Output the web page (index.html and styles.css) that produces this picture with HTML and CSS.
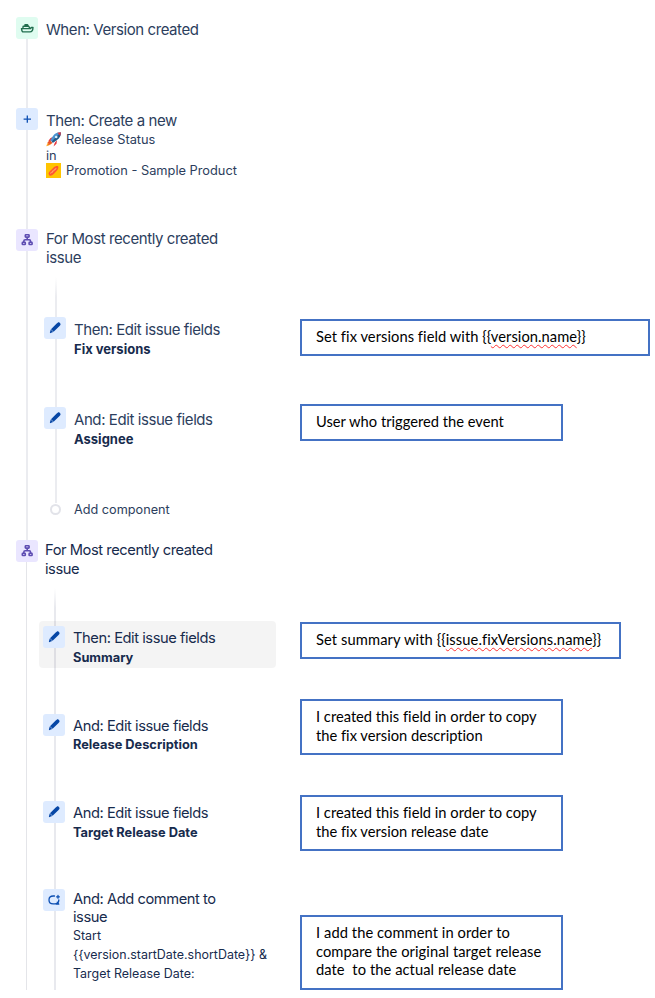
FILE: index.html
```
<!DOCTYPE html>
<html lang="en">
<head>
    <meta charset="UTF-8">
    <meta name="viewport" content="width=device-width, initial-scale=1.0">
    <title>Automation rule</title>
    <link rel="stylesheet" href="styles.css">
</head>
<body>
    <svg class="sprite" width="0" height="0">
        <symbol id="pencil" viewBox="0 0 22 22">
            <path fill="#0747a6" d="M12.7 6.5l1-.8c.7-.5 1.3-.5 1.9.1l.5.5c.6.6.6 1.3.1 1.9l-.9 1-5.7 5.6L7 12.200zM6.700 12.600l2.500 2.500-2.600 1c-.5.2-.8-.1-.7-.6z"/>
        </symbol>
        <symbol id="branch" viewBox="0 0 22 22">
            <g fill="none" stroke="#5e4db2" stroke-width="1.6">
                <rect x="9.3" y="5.8" width="3.8" height="2.3" rx=".6"/>
                <rect x="6.3" y="13.3" width="3" height="2.2" rx=".6"/>
                <rect x="13.1" y="13.3" width="3" height="2.2" rx=".6"/>
                <path d="M11.2 8v2.8M7.8 13v-.8c0-.9.5-1.4 1.4-1.4h4c.9 0 1.4.5 1.4 1.4v.8"/>
            </g>
        </symbol>
    </svg>

    <main class="page">
        <div class="flow">
            <div class="group">
                <div class="step trigger">
                    <span class="icon green">
                        <svg viewBox="0 0 22 22">
                            <path fill="none" stroke="#216e4e" stroke-width="1.4" stroke-linejoin="round" d="M5.500 11.600h9l.9-1.100H17c-.1 2.600-1.100 4.400-3 4.400H7.300c-1.200 0-1.600-1.600-1.800-3.300zM7 11.400V9.900c0-.4.2-.6.6-.6h5.100l1.300 2.100M9 9.100V7.800h2.600l.7 1.400"/>
                        </svg>
                    </span>
                    <div class="text"><h2>When: Version created</h2></div>
                </div>
                <div class="step create">
                    <span class="icon blue">
                        <svg viewBox="0 0 22 22">
                            <path fill="none" stroke="#0c4fb3" stroke-width="1.3" d="M11.3 7.4v7.4M7.6 11.1H15"/>
                        </svg>
                    </span>
                    <div class="text">
                        <h2>Then: Create a new</h2>
                        <p class="small">
                            <svg class="emoji" viewBox="0 0 15 15">
                                <path fill="#e5343d" d="M4.3 6.2L7 4.7 5.6 8.6 2 9.6zM8.8 10.8l-1.3 3.6 3-2.7.5-3.8z"/>
                                <path fill="#4b93cf" d="M14.8.3c-3.7-.2-6 1.3-7.6 3.5L4.3 8.2l2.6 2.6 4.3-3C13.5 6.1 14.9 3.8 14.8.3z"/>
                                <path fill="#245987" d="M14.8.3c.1 3.5-1.3 5.8-3.6 7.5l-4.3 3-1.2-1.2z"/>
                                <path fill="#e5343d" d="M14.8.3l-3.4.4 3 3z"/>
                                <circle cx="10.2" cy="5" r="1.3" fill="#d7eefb"/>
                                <path fill="#ffac33" d="M4 9.2c-1.8.2-2.9 2.2-3.7 5 2.6-.6 4.8-1.5 5.5-3.2z"/>
                                <path fill="#e9562b" d="M3.9 8.2L1.2 11l1.5.2-.8 2.1 4.7-2.4z"/>
                            </svg>
                            Release Status
                        </p>
                        <p class="small">in</p>
                        <p class="small">
                            <svg class="emoji" viewBox="0 0 15 15">
                                <path fill="#ffc400" d="M0 0h15v15H0z"/>
                                <path fill="#ff5630" d="M2.7 11.2c-.5-1.3.4-2.3 1.9-3.8l3-3c1.5-1.3 3.3-1.8 4.3-1.3.9.8.6 2.6-.7 4.2L8 10.8c-1.6 1.5-3.3 2.4-4.6 1.8z"/>
                                <path fill="none" stroke="#ffab6b" stroke-width="1" d="M4.6 10.7l.6-1.5 1.2.2.3-1.6 1.3.1.3-1.6 1.3.1.4-1.5"/>
                            </svg>
                            Promotion - Sample Product
                        </p>
                    </div>
                </div>
                <div class="step for">
                    <span class="icon purple"><svg><use href="#branch"/></svg></span>
                    <div class="text"><h2>For Most recently created issue</h2></div>
                </div>
                <div class="branch">
                    <div class="step">
                        <span class="icon blue"><svg><use href="#pencil"/></svg></span>
                        <div class="text"><h2>Then: Edit issue fields</h2><strong>Fix versions</strong></div>
                    </div>
                    <div class="step">
                        <span class="icon blue"><svg><use href="#pencil"/></svg></span>
                        <div class="text"><h2>And: Edit issue fields</h2><strong>Assignee</strong></div>
                    </div>
                    <div class="add"><span class="dot"></span>Add component</div>
                </div>
            </div>

            <div class="group second">
                <div class="step for">
                    <span class="icon purple"><svg><use href="#branch"/></svg></span>
                    <div class="text"><h2>For Most recently created issue</h2></div>
                </div>
                <div class="branch">
                    <div class="step selected">
                        <span class="icon blue"><svg><use href="#pencil"/></svg></span>
                        <div class="text"><h2>Then: Edit issue fields</h2><strong>Summary</strong></div>
                    </div>
                    <div class="step">
                        <span class="icon blue"><svg><use href="#pencil"/></svg></span>
                        <div class="text"><h2>And: Edit issue fields</h2><strong>Release Description</strong></div>
                    </div>
                    <div class="step">
                        <span class="icon blue"><svg><use href="#pencil"/></svg></span>
                        <div class="text"><h2>And: Edit issue fields</h2><strong>Target Release Date</strong></div>
                    </div>
                    <div class="step comment">
                        <span class="icon blue">
                            <svg viewBox="0 0 22 22">
                                <path fill="none" stroke="#0c4fb3" stroke-width="1.3" stroke-linecap="round" stroke-linejoin="round" d="M11.5 7h-1.300C7.600 7 6 8.700 6 10.900s1.600 3.900 4.200 3.900h1.600c2.400 0 4-1.600 4-3.900M14.200 13.300l1.600 1.800h-2.600M15 6.400v2.800M13.600 7.800h2.800"/>
                            </svg>
                        </span>
                        <div class="text">
                            <h2>And: Add comment to<br>issue</h2>
                            <p class="small">Start<br>{{version.startDate.shortDate}} &amp;<br>Target Release Date:</p>
                        </div>
                    </div>
                </div>
            </div>
        </div>

        <div class="notes">
            <div class="note wide">Set fix versions field with {{<u>version.name</u>}}</div>
            <div class="note user">User who triggered the event</div>
            <div class="note summary">Set summary with {{<u>issue.fixVersions.name</u>}}</div>
            <div class="note description">I created this field in order to copy<br>the fix version description</div>
            <div class="note date">I created this field in order to copy<br>the fix version release date</div>
            <div class="note compare">I add the comment in order to<br>compare the original target release<br>date&nbsp; to the actual release date</div>
        </div>
    </main>
</body>
</html>
```

FILE: styles.css
```
* {
    box-sizing: border-box;
}
body {
    margin: 0;
    background: #fff;
    color: #172b4d;
    font-family: Inter, "Liberation Sans", sans-serif;
}
h2, p {
    margin: 0;
    font-weight: 400;
}
.sprite {
    display: block;
}
.page {
    display: flex;
    height: 998px;
    overflow: hidden;
}
.flow {
    width: 300px;
    flex: none;
}

/* main vertical line */
.group {
    height: 540px;
    padding: 17px 0 0 16px;
    background: linear-gradient(#ebecf0, #ebecf0) 26px 28px / 2px 512px no-repeat;
    color: #2c3e5d;
}
.group.second {
    height: 450px;
    padding-top: 0;
    background: linear-gradient(#e4e5e9, #e4e5e9) 26px 0 / 1px 450px no-repeat;
    color: #172b4d;
}

.step {
    display: flex;
    gap: 8px;
    height: 90px;
}
.trigger {
    height: 91px;
}
.create {
    height: 121px;
}
.for {
    height: 48px;
}
.icon {
    flex: none;
    width: 22px;
    height: 22px;
    border-radius: 3px;
}
.icon svg {
    display: block;
    width: 22px;
    height: 22px;
}
.green {
    background: #dffcf0;
}
.blue {
    background: #deebff;
}
.purple {
    background: #eae6ff;
}
.text {
    padding-top: 3.5px;
}
.for .text {
    width: 190px;
    padding-top: 1px;
}
.step h2 {
    font-size: 15px;
    line-height: 18.5px;
    letter-spacing: -0.42px;
}
.step strong {
    display: block;
    color: #172b4d;
    font-size: 13px;
    line-height: 20px;
    font-weight: 700;
}
.small {
    font-size: 12.8px;
    line-height: 15.5px;
}
.create h2 {
    padding-bottom: 2px;
}
.create .small {
    display: flex;
    gap: 5px;
    align-items: center;
}
.emoji {
    width: 15px;
    height: 15px;
    flex: none;
}

/* nested steps */
.branch {
    margin-left: 28px;
    padding-top: 40px;
    background: linear-gradient(transparent, #ebecf0 20px) 11px 0 / 2px 226px no-repeat;
}
.second .branch {
    height: 402px;
    margin-left: 27px;
    padding-top: 38px;
    background: linear-gradient(transparent, #e8e9ee 20px) 11px 0 / 2px 402px no-repeat;
}
.second .step {
    height: 87.5px;
}
.second .text {
    padding-top: 3px;
}
.second .for {
    gap: 7px;
    height: 48px;
}
.second .for .text {
    padding-top: 1px;
}
.second .step h2 {
    font-size: 14.7px;
    letter-spacing: -0.44px;
}
.second .step strong {
    font-size: 12.8px;
}
.second .selected {
    width: 237px;
    height: 47px;
    margin: -5px 0 45.5px -4px;
    padding: 5px 0 0 4px;
    border-radius: 4px;
    background: rgba(0, 0, 0, 0.045);
}
.second .comment .text {
    padding-top: 1px;
}
.comment .small {
    margin-top: -1px;
    font-size: 12.45px;
    line-height: 19px;
}
.add {
    display: flex;
    gap: 13px;
    align-items: center;
    height: 24px;
    padding-left: 6px;
    font-size: 12.7px;
}
.dot {
    width: 11px;
    height: 11px;
    border: 2px solid #e2e3e9;
    border-radius: 50%;
    background: #fff;
}

/* notes beside the steps */
.notes {
    padding-top: 319px;
}
.note {
    width: 263px;
    height: 56px;
    padding: 6px 0 0 14px;
    border: 2px solid #4472c4;
    background: #fff;
    color: #000;
    font-family: Lato, "Liberation Sans", sans-serif;
    font-size: 14.7px;
    line-height: 18.7px;
    font-variant-ligatures: none;
    white-space: nowrap;
}
.wide {
    width: 350px;
    height: 37px;
    letter-spacing: 0.05px;
}
.user {
    height: 37px;
    margin-top: 48px;
}
.summary {
    width: 321px;
    height: 37px;
    margin-top: 181px;
    letter-spacing: 0.1px;
}
.description {
    margin-top: 40px;
}
.date {
    margin-top: 40px;
}
.compare {
    height: 75px;
    margin-top: 64px;
    letter-spacing: 0.07px;
}
.note u {
    text-decoration: underline wavy #f33 1px;
    text-decoration-skip-ink: none;
    text-underline-offset: 2px;
}
```
